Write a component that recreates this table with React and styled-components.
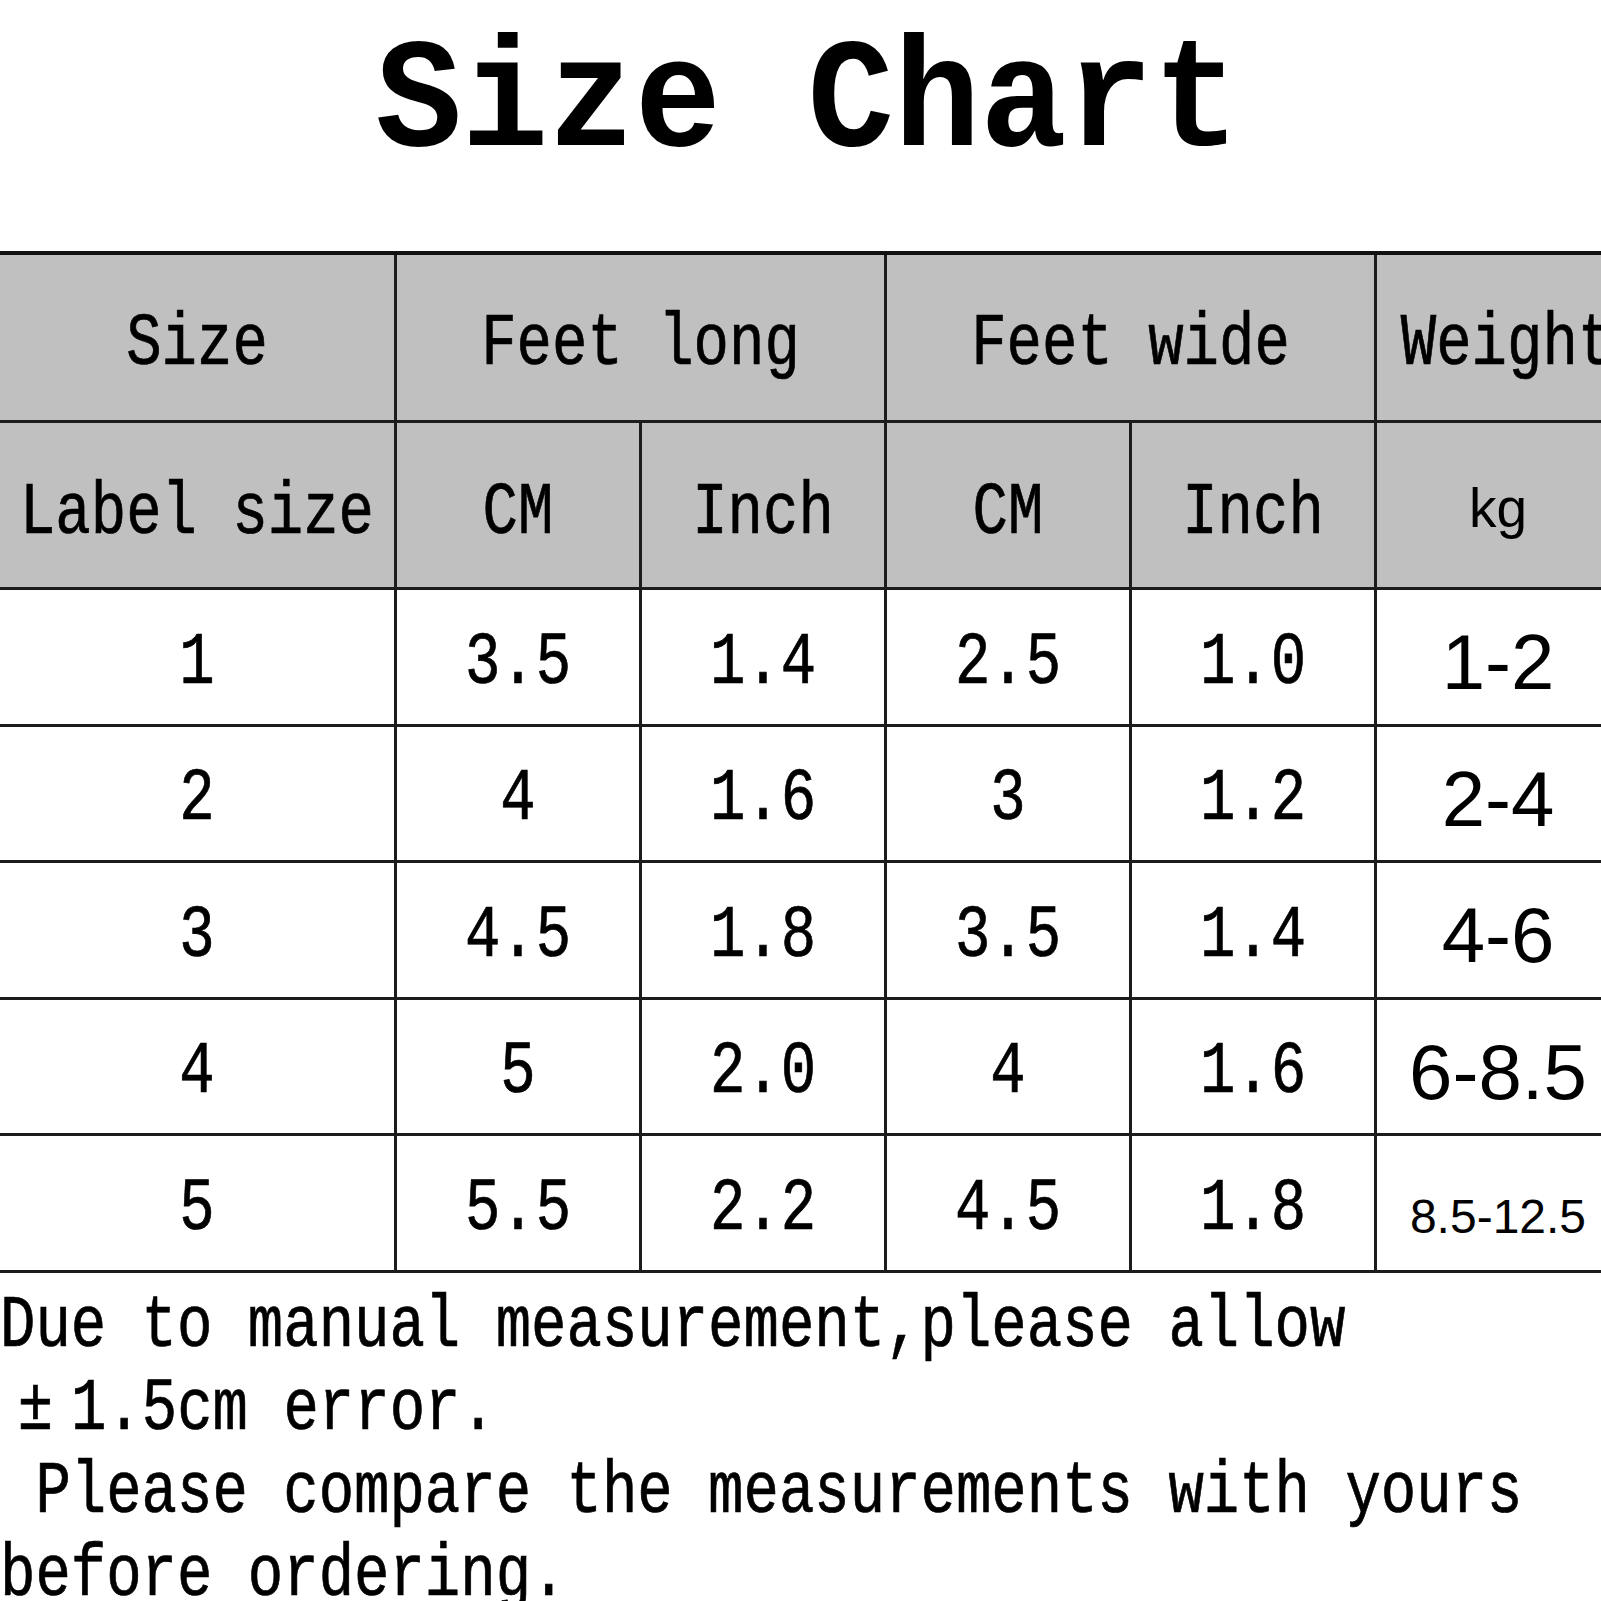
import React from "react";
import styled, { createGlobalStyle } from "styled-components";

const GlobalStyle = createGlobalStyle`
  html, body {
    margin: 0;
    padding: 0;
    background: #fff;
  }
`;

const Page = styled.div`
  width: 1601px;
  height: 1601px;
  overflow: hidden;
  background: #fff;
  color: #000;
  font-family: "Liberation Mono", "Courier New", monospace;
`;

const Title = styled.h1`
  margin: 0;
  height: 251px;
  box-sizing: border-box;
  padding: 32px 0 0 14px;
  display: flex;
  justify-content: center;
  align-items: flex-start;
  font-size: 144px;
  font-weight: 700;
  line-height: 144px;
  white-space: pre;
`;

const Stretch = styled.span`
  display: inline-block;
  white-space: pre;
  transform: scaleY(${(p) => p.$k || 1.24});
  transform-origin: center;
  -webkit-text-stroke: ${(p) => (p.$bold ? 0 : 0.6)}px #000;
`;

const Table = styled.div`
  display: grid;
  width: 1621px;
  grid-template-columns: 397px repeat(5, 245px);
  grid-template-rows: 168px 167px 137px 136px 137px 136px 137px;
  border-top: 4px solid #111;
`;

const Cell = styled.div`
  box-sizing: border-box;
  display: flex;
  align-items: center;
  justify-content: center;
  border-right: 3px solid #1c1c1c;
  border-bottom: 3px solid #1c1c1c;
  background: ${(p) => (p.$head ? "#c0c0c0" : "#fff")};
  grid-column: ${(p) => (p.$span ? `span ${p.$span}` : "auto")};
  font-size: 59px;
  line-height: 1;
  white-space: pre;
  padding-top: ${(p) => p.$pt || 12}px;
  padding-left: ${(p) => p.$pl || 0}px;
`;

const SansText = styled.span`
  font-family: "Liberation Sans", Arial, sans-serif;
  font-size: ${(p) => p.$size}px;
  line-height: 1;
  display: inline-block;
`;

const Note = styled.div`
  padding: 12px 0 0 0;
  font-size: 59px;
`;

const NoteLine = styled.div`
  height: 83px;
  line-height: 83px;
  white-space: pre;
`;

const Wide = styled.span`
  display: inline-block;
  width: 71px;
  text-align: center;
`;

const rows = [
  ["1", "3.5", "1.4", "2.5", "1.0", "1-2"],
  ["2", "4", "1.6", "3", "1.2", "2-4"],
  ["3", "4.5", "1.8", "3.5", "1.4", "4-6"],
  ["4", "5", "2.0", "4", "1.6", "6-8.5"],
  ["5", "5.5", "2.2", "4.5", "1.8", "8.5-12.5"],
];

export default function App() {
  return (
    <Page>
      <GlobalStyle />
      <Title>
        <Stretch $k={1.08} $bold>
          Size Chart
        </Stretch>
      </Title>
      <Table>
        <Cell $head $pt={14}>
          <Stretch>Size</Stretch>
        </Cell>
        <Cell $head $span={2} $pt={14}>
          <Stretch>Feet long</Stretch>
        </Cell>
        <Cell $head $span={2} $pt={14}>
          <Stretch>Feet wide</Stretch>
        </Cell>
        <Cell $head $pt={14} $pl={18}>
          <Stretch>Weight</Stretch>
        </Cell>

        <Cell $head $pt={16}>
          <Stretch>Label size</Stretch>
        </Cell>
        <Cell $head $pt={16}>
          <Stretch>CM</Stretch>
        </Cell>
        <Cell $head $pt={16}>
          <Stretch>Inch</Stretch>
        </Cell>
        <Cell $head $pt={16}>
          <Stretch>CM</Stretch>
        </Cell>
        <Cell $head $pt={16}>
          <Stretch>Inch</Stretch>
        </Cell>
        <Cell $head $pt={6}>
          <SansText $size={55}>kg</SansText>
        </Cell>

        {rows.map((r, i) => (
          <React.Fragment key={i}>
            {r.slice(0, 5).map((v, j) => (
              <Cell key={j}>
                <Stretch>{v}</Stretch>
              </Cell>
            ))}
            <Cell $pt={i === 4 ? 28 : 10}>
              <SansText $size={i === 4 ? 48 : 78}>{r[5]}</SansText>
            </Cell>
          </React.Fragment>
        ))}
      </Table>
      <Note>
        <NoteLine>
          <Stretch>Due to manual measurement,please allow</Stretch>
        </NoteLine>
        <NoteLine>
          <Stretch>
            <Wide>±</Wide>1.5cm error.
          </Stretch>
        </NoteLine>
        <NoteLine>
          <Stretch> Please compare the measurements with yours</Stretch>
        </NoteLine>
        <NoteLine>
          <Stretch>before ordering.</Stretch>
        </NoteLine>
      </Note>
    </Page>
  );
}
